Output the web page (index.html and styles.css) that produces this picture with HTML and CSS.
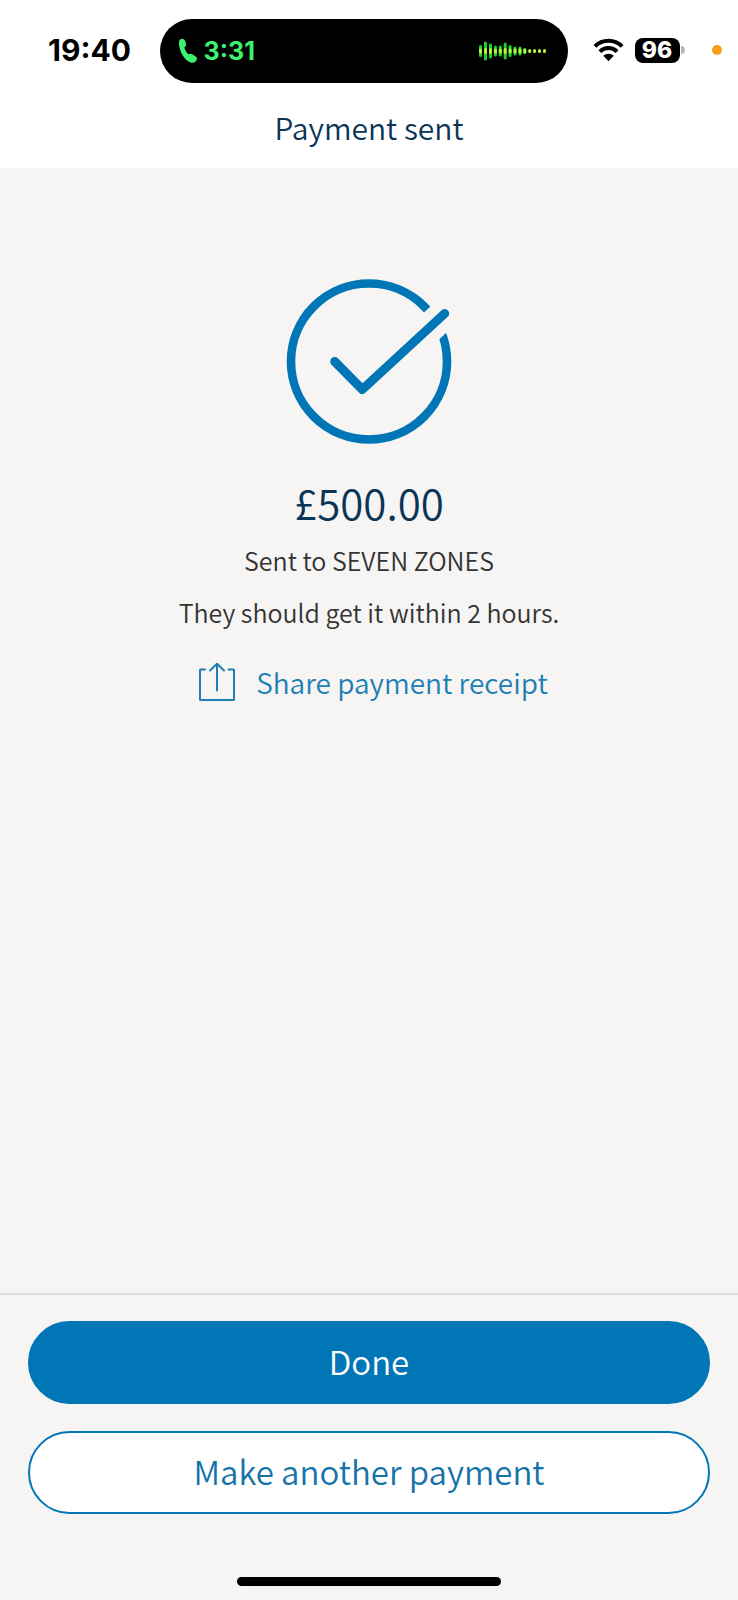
FILE: index.html
```html
<!DOCTYPE html>
<html lang="en">
<head>
<meta charset="utf-8">
<meta name="viewport" content="width=device-width, initial-scale=1">
<title>Payment sent</title>
<link rel="stylesheet" href="styles.css">
</head>
<body>
<div class="status-bar">
  <time class="clock">19:40</time>
  <div class="island">
    <div class="call">
      <svg class="call-icon" viewBox="0 0 20 26" aria-hidden="true"><path d="M1 4C1 1.600 3.400.6 5 .9C6.600 1.100 7.400 3 7.900 5.500C8.300 7.500 7.600 8.600 6.300 9.500C7 12 8.300 14.200 10.400 16.300C11.600 15.500 12.700 15.500 14.200 16.300L17.700 18.500C19.600 19.800 19.200 22 17.300 23.700C15.500 25.400 12.500 25.200 9.700 23C4.200 18.800.8 11 1 4Z" fill="#3df26c"/></svg>
      <span class="call-time">3:31</span>
    </div>
    <svg class="wave" viewBox="0 0 70 20" aria-hidden="true">
      <g class="wave-bars"><path d="M2.500 5.500v9M7.500 2v16M12.500 4v12M17.400 6v8M22.300 6v8M27.200 3v14M32.100 5.500v9M37 7v6M42 7v6M46.800 8.500v3"/></g>
      <g class="wave-core"><path d="M2.500 9v2M7.500 8.500v3M12.500 8.500v3M17.400 9v2M22.300 9v2M27.200 8.500v3M32.100 9v2M37 9v2M42 9v2M46.800 9v2M51.700 9.500v1M56.600 9.500v1M61.500 9.500v1M66.500 9.500v1"/></g>
    </svg>
  </div>
  <div class="indicators">
    <svg class="wifi" viewBox="0 0 31 24" aria-hidden="true">
      <path d="M1.900 8.400A19.500 19.500 0 0 1 29.100 8.400M6.900 13.600A12.300 12.300 0 0 1 24.100 13.600" fill="none" stroke="#000" stroke-width="4"/>
      <path d="M15.500 23.200L10.200 17.800A7.600 7.600 0 0 1 20.800 17.800Z" fill="#000"/>
    </svg>
    <div class="battery"><span class="battery-level">96</span><span class="battery-cap"></span></div>
    <span class="mic-dot"></span>
  </div>
</div>
<header class="title-bar"><h1 class="title">Payment sent</h1></header>
<main class="content">
  <svg class="tick" viewBox="0 0 168 168" aria-hidden="true">
    <mask id="gap" maskUnits="userSpaceOnUse" x="0" y="0" width="168" height="168">
      <rect width="168" height="168" fill="#fff"/>
      <path d="M100 90.900L180 17.100" stroke="#000" stroke-width="30"/>
    </mask>
    <circle cx="84" cy="83.500" r="78" fill="none" stroke="#0076b6" stroke-width="8.600" mask="url(#gap)"/>
    <path d="M49.700 83.500L77.300 111.500L159.700 35.500" fill="none" stroke="#0076b6" stroke-width="9" stroke-linecap="round" stroke-linejoin="round"/>
  </svg>
  <p class="amount">£500.00</p>
  <p class="detail">Sent to SEVEN ZONES</p>
  <p class="detail">They should get it within 2 hours.</p>
  <a class="share" href="#">
    <svg class="share-icon" viewBox="0 0 38 40" aria-hidden="true"><path d="M7 7.500H2.500Q2 7.500 2 8V37.500Q2 38 2.500 38H35.500Q36 38 36 37.500V8Q36 7.500 35.500 7.500H30.500M19 28.500V2M12 8.500L19 1.800L26 8.500" fill="none" stroke="#1c7fb5" stroke-width="2" stroke-linecap="round" stroke-linejoin="round"/></svg>
    <span>Share payment receipt</span>
  </a>
</main>
<footer class="actions">
  <button class="button primary" type="button">Done</button>
  <button class="button secondary" type="button">Make another payment</button>
</footer>
<div class="home-area"><span class="home-bar"></span></div>
</body>
</html>
```

FILE: styles.css
```css
* { box-sizing: border-box; }

body {
  margin: 0;
  min-height: 100vh;
  display: flex;
  flex-direction: column;
  background: #f6f5f4;
  font-family: "Noto Sans CJK SC", "Noto Sans", sans-serif;
  font-weight: 350;
}

h1, p { margin: 0; font-weight: inherit; }

svg { display: block; flex: none; }

.status-bar {
  display: grid;
  grid-template-columns: 1fr 408px 1fr;
  align-items: center;
  padding: 19px 11px 0 0;
  background: #fff;
  font-family: Inter, sans-serif;
}

.clock {
  padding-left: 48px;
  font-size: 30px;
  line-height: 36px;
  padding-bottom: 2px;
  font-weight: 700;
  color: #000;
}

.island {
  height: 64px;
  padding: 0 20px 0 18px;
  display: flex;
  align-items: center;
  justify-content: space-between;
  border-radius: 32px;
  background: #000;
}

.call { display: flex; align-items: center; gap: 6px; }
.call-icon { width: 20px; height: 26px; }
.call-time { font-size: 25px; font-weight: 700; color: #3df26c; }

.wave { width: 70px; height: 20px; fill: none; stroke-width: 3; stroke-linecap: round; }
.wave-bars { stroke: #1fd02b; }
.wave-core { stroke: #b9f53c; }

.indicators {
  display: flex;
  align-items: center;
  padding: 0 0 2px 25px;
}

.wifi { width: 31px; height: 24px; margin-right: 11px; }

.battery { display: flex; align-items: center; gap: 1px; }
.battery-level {
  width: 45px;
  height: 25px;
  border-radius: 8px;
  background: #000;
  color: #fff;
  font-size: 23px;
  font-weight: 800;
  line-height: 25px;
  text-align: center;
}
.battery-cap { width: 4px; height: 8px; border-radius: 0 4px 4px 0; background: #b8b8b8; }

.mic-dot { width: 10px; height: 10px; margin-left: auto; margin-right: 5px; border-radius: 50%; background: #f7a11a; }

.title-bar { padding: 20px 16px 17px; background: #fff; }
.title { font-size: 30px; line-height: 48px; text-align: center; color: #0b3556; }

.content {
  flex: 1;
  display: flex;
  flex-direction: column;
  align-items: center;
  padding: 110px 16px 32px;
  text-align: center;
}

.tick { width: 168px; height: 168px; }

.amount { margin-top: 24px; font-size: 42px; line-height: 64px; color: #0b3556; }

.detail { font-size: 25px; line-height: 52px; color: #333; }

.share {
  display: flex;
  align-items: center;
  gap: 20px;
  margin-top: 20px;
  padding-left: 8px;
  font-size: 28px;
  line-height: 48px;
  color: #1c7fb5;
  text-decoration: none;
}
.share-icon { width: 38px; height: 40px; }

.actions {
  display: flex;
  flex-direction: column;
  gap: 27px;
  padding: 26px 28px 0;
  border-top: 2px solid #dcdbda;
}

.button {
  height: 83px;
  padding: 0 16px 4px;
  border: 2px solid #0076b6;
  border-radius: 42px;
  font: inherit;
  font-size: 33px;
}
.primary { background: #0076b6; color: #fff; }
.secondary { background: #fff; color: #1673a8; }

.home-area { display: flex; justify-content: center; padding: 63px 0 14px; }
.home-bar { width: 264px; height: 9px; border-radius: 5px; background: #000; }
```
